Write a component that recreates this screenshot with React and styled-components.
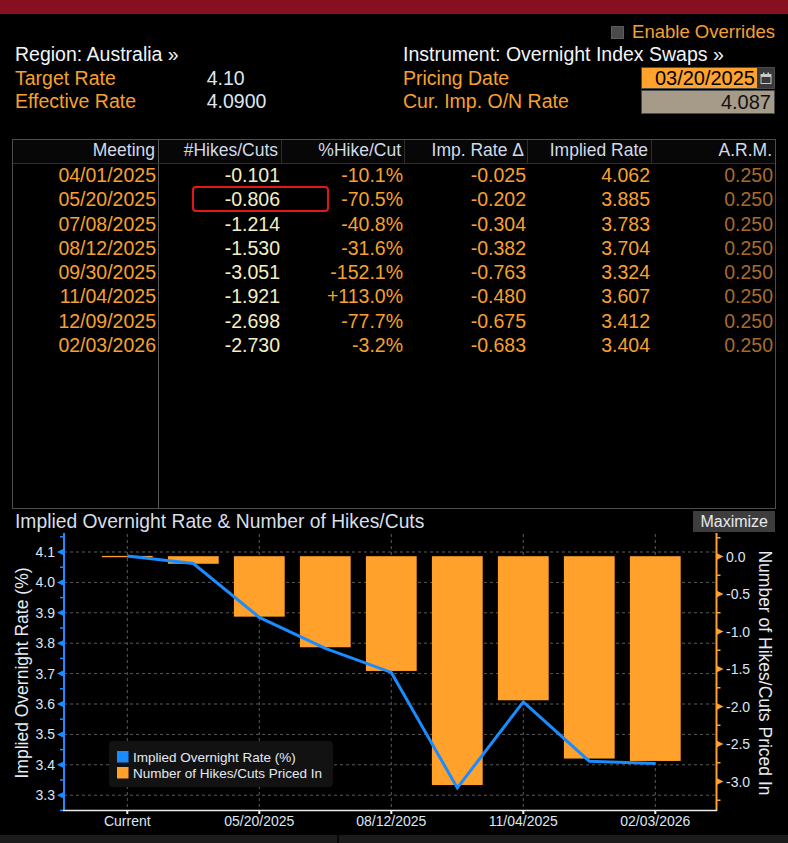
import React from 'react'
import styled, { createGlobalStyle } from 'styled-components'

const ORANGE = '#f7a02f'
const BAR = '#ffa12b'
const BLUE = '#1a8cff'
const PALE = '#dde6f3'

const GlobalStyle = createGlobalStyle`
html, body {
  margin: 0;
  padding: 0;
  background: #000;
}
body {
  font-family: "Liberation Sans", Arial, sans-serif;
  color: ${PALE};
}
`

const Page = styled.div`
width: 788px;
background: #000;
overflow: hidden;
`

const TitleBar = styled.div`
height: 14px;
background: #870f22;
`

const Header = styled.div`
display: grid;
grid-template-columns: 388px 1fr;
padding: 0 13px 0 15px;
`

const OverrideRow = styled.div`
grid-column: 1 / 3;
display: flex;
justify-content: flex-end;
align-items: center;
gap: 8px;
height: 23.4px;
margin-top: 6px;
font-size: 18.5px;
color: ${ORANGE};
`

const Checkbox = styled.span`
width: 11px;
height: 11px;
background: #4a4a4a;
border: 1px solid #5c5c5c;
margin-top: 1px;
`

const InfoColumn = styled.div`
display: flex;
flex-direction: column;
`

const InfoRow = styled.div`
display: flex;
align-items: center;
justify-content: space-between;
height: 23.4px;
font-size: 19.5px;
line-height: 23.4px;
white-space: nowrap;
`

const LeftRow = styled(InfoRow)`
justify-content: flex-start;
`

const Label = styled.span`
width: ${p => (p.$width ? p.$width : 'auto')};
color: ${p => (p.$tone === 'white' ? '#f2f4f7' : ORANGE)};
`

const Value = styled.span`
color: ${PALE};
`

const DateBox = styled.div`
display: flex;
width: 134px;
height: 22px;
box-sizing: border-box;
border: 1px solid #4a4a4a;
`

const DateField = styled.div`
flex: 1;
background: #ffa32d;
color: #000;
text-align: right;
padding-right: 2px;
font-size: 20px;
line-height: 20px;
`

const CalendarCell = styled.div`
width: 17px;
background: #3a3a3a;
display: flex;
align-items: center;
justify-content: center;
`

const RateBox = styled.div`
width: 134px;
height: 24px;
box-sizing: border-box;
border: 1px solid #4a4a4a;
background: #a69a89;
color: #111;
text-align: right;
padding-right: 3px;
font-size: 20px;
line-height: 22px;
`

const Table = styled.div`
margin: 25.4px 0 0 12px;
width: 764px;
height: 370px;
box-sizing: border-box;
border: 1px solid #4d4d4d;
display: flex;
flex-direction: column;
`

const COLUMNS = '146px 123px 123px 123px 124px 123px'

const HeaderRow = styled.div`
display: grid;
grid-template-columns: ${COLUMNS};
height: 23px;
border-bottom: 1px solid #2e2e2e;
background: #070707;
`

const HeadCell = styled.div`
text-align: right;
padding-right: 3px;
font-size: 17.5px;
line-height: 21px;
color: #d2dbe7;
border-right: 1px solid ${p => (p.$first ? '#5a5a5a' : '#2e2e2e')};
&:last-child {
  border-right: none;
}
`

const Body = styled.div`
flex: 1;
background: linear-gradient(to right, transparent 145px, #5a5a5a 145px, #5a5a5a 146px, transparent 146px);
`

const BodyRow = styled.div`
display: grid;
grid-template-columns: ${COLUMNS};
height: 24.3px;
`

const CELL_COLOURS = {
  date: ORANGE,
  count: '#f4f0c2',
  orange: ORANGE,
  dim: '#a86b2b',
}

const Cell = styled.div`
position: relative;
text-align: right;
padding-right: ${p => (p.$first ? '3px' : '2px')};
font-size: 19.5px;
line-height: 22px;
color: ${p => CELL_COLOURS[p.$tone]};
${p =>
  p.$marked &&
  `&::after {
    content: '';
    position: absolute;
    left: 33px;
    right: -47px;
    top: -2px;
    bottom: 1px;
    border: 2px solid #e3161b;
    border-radius: 4px;
  }`}
`

const ChartHeader = styled.div`
display: flex;
align-items: center;
justify-content: space-between;
height: 22px;
margin-top: 2px;
padding: 0 13px 0 15px;
`

const ChartTitle = styled.span`
font-size: 19.3px;
color: #d7dfea;
white-space: nowrap;
`

const MaximizeButton = styled.button`
height: 21px;
padding: 0 7px;
border: none;
background: #3d3d3d;
color: #e6eaf0;
font-family: "Liberation Sans", Arial, sans-serif;
font-size: 16px;
line-height: 21px;
`

const ChartSvg = styled.svg`
display: block;
`

const StatusStrip = styled.div`
height: 8px;
background: linear-gradient(to right, #1b1b1b 337px, #060606 337px, #060606 339px, #1b1b1b 339px);
`

const rows = [
  ['04/01/2025', '-0.101', '-10.1%', '-0.025', '4.062', '0.250'],
  ['05/20/2025', '-0.806', '-70.5%', '-0.202', '3.885', '0.250'],
  ['07/08/2025', '-1.214', '-40.8%', '-0.304', '3.783', '0.250'],
  ['08/12/2025', '-1.530', '-31.6%', '-0.382', '3.704', '0.250'],
  ['09/30/2025', '-3.051', '-152.1%', '-0.763', '3.324', '0.250'],
  ['11/04/2025', '-1.921', '+113.0%', '-0.480', '3.607', '0.250'],
  ['12/09/2025', '-2.698', '-77.7%', '-0.675', '3.412', '0.250'],
  ['02/03/2026', '-2.730', '-3.2%', '-0.683', '3.404', '0.250'],
]

const tones = ['date', 'count', 'orange', 'orange', 'orange', 'dim']
const heads = ['Meeting', '#Hikes/Cuts', '%Hike/Cut', 'Imp. Rate Δ', 'Implied Rate', 'A.R.M.']

const rates = [4.087, ...rows.map(r => parseFloat(r[4]))]
const hikes = [0, ...rows.map(r => parseFloat(r[1]))]

const xAt = i => 127.3 + 66 * i
const yLeft = v => 552 + (4.1 - v) * 304
const yRight = v => 556.5 - v * 75

const leftMajor = [4.1, 4.0, 3.9, 3.8, 3.7, 3.6, 3.5, 3.4, 3.3]
const rightMajor = [0, -0.5, -1, -1.5, -2, -2.5, -3]
const xLabels = [
  ['Current', 0],
  ['05/20/2025', 2],
  ['08/12/2025', 4],
  ['11/04/2025', 6],
  ['02/03/2026', 8],
]

const CalendarIcon = () => (
  <svg width="12" height="12" viewBox="0 0 12 12">
    <rect x="1" y="2.5" width="10" height="9" fill="none" stroke="#c8c8c8" strokeWidth="1" />
    <rect x="1" y="2.5" width="10" height="2.5" fill="#c8c8c8" />
    <rect x="3" y="0.5" width="1.5" height="3" fill="#c8c8c8" />
    <rect x="7.5" y="0.5" width="1.5" height="3" fill="#c8c8c8" />
  </svg>
)

const Chart = () => {
  const line = rates.map((r, i) => `${xAt(i)},${yLeft(r)}`).join(' ')
  return (
    <ChartSvg width="788" height="302" viewBox="0 533 788 302" fontFamily="Liberation Sans, Arial, sans-serif">
      {leftMajor.map(v => (
        <line key={'h' + v} x1="64" x2="716" y1={yLeft(v)} y2={yLeft(v)} stroke="#5a5a5a" strokeDasharray="3 3" />
      ))}
      {xLabels.map(([, i]) => (
        <line key={'v' + i} x1={xAt(i)} x2={xAt(i)} y1="534" y2="810" stroke="#5a5a5a" strokeDasharray="3 3" />
      ))}

      {hikes.map((h, i) =>
        i === 0 ? (
          <rect key={i} x={xAt(i) - 25.4} y="555.9" width="50.8" height="1.3" fill={BAR} />
        ) : (
          <rect key={i} x={xAt(i) - 25.4} y="556.2" width="50.8" height={-h * 75} fill={BAR} />
        )
      )}
      <polyline points={line} fill="none" stroke={BLUE} strokeWidth="3" />

      <line x1="64" x2="64" y1="533" y2="811" stroke={BLUE} strokeWidth="2" />
      {leftMajor.map(v => (
        <g key={'lt' + v}>
          <polygon points={`64,${yLeft(v) - 3.5} 64,${yLeft(v) + 3.5} 57,${yLeft(v)}`} fill={BLUE} />
          <text x="55" y={yLeft(v) + 5} textAnchor="end" fontSize="14" fill={PALE}>{v.toFixed(1)}</text>
        </g>
      ))}
      {[...leftMajor, 3.2].map(v => (
        <line key={'lm' + v} x1="60" x2="64" y1={yLeft(v + 0.05)} y2={yLeft(v + 0.05)} stroke={BLUE} strokeWidth="1.5" />
      ))}

      <line x1="716.5" x2="716.5" y1="533" y2="811" stroke={BAR} strokeWidth="2" />
      {rightMajor.map(v => (
        <g key={'rt' + v}>
          <polygon points={`716.5,${yRight(v) - 3.5} 716.5,${yRight(v) + 3.5} 723.5,${yRight(v)}`} fill={BAR} />
          <text x="726" y={yRight(v) + 5} fontSize="14" fill={PALE}>{v === 0 ? '0.0' : v.toFixed(1)}</text>
        </g>
      ))}
      {[0.25, -0.25, -0.75, -1.25, -1.75, -2.25, -2.75, -3.25].map(v => (
        <line key={'rm' + v} x1="716.5" x2="720.5" y1={yRight(v)} y2={yRight(v)} stroke={BAR} strokeWidth="1.5" />
      ))}

      <line x1="63" x2="717" y1="810.5" y2="810.5" stroke="#ececec" strokeWidth="1.5" />
      {xLabels.map(([label, i]) => (
        <g key={label}>
          <line x1={xAt(i)} x2={xAt(i)} y1="810" y2="814" stroke="#ececec" strokeWidth="2" />
          <text x={xAt(i)} y="826" textAnchor="middle" fontSize="14" fill={PALE}>{label}</text>
        </g>
      ))}

      <text x="27.5" y="673" transform="rotate(-90 27.5 673)" textAnchor="middle" fontSize="17.5" fill="#e6ecf5">
        Implied Overnight Rate (%)
      </text>
      <text x="759" y="673" transform="rotate(90 759 673)" textAnchor="middle" fontSize="17.5" fill="#e6ecf5">
        Number of Hikes/Cuts Priced In
      </text>

      <rect x="109" y="741" width="224" height="46" rx="4" fill="#121212" />
      <rect x="117" y="751" width="11.5" height="11.5" fill={BLUE} />
      <rect x="117" y="767" width="11.5" height="11.5" fill={BAR} />
      <text x="133" y="761.5" fontSize="13.5" fill="#e4eaf4">Implied Overnight Rate (%)</text>
      <text x="133" y="777.5" fontSize="13.5" fill="#e4eaf4">Number of Hikes/Cuts Priced In</text>
    </ChartSvg>
  )
}

const App = () => {
  return (
    <Page>
      <GlobalStyle />
      <TitleBar />
      <Header>
        <OverrideRow>
          <Checkbox />
          <span>Enable Overrides</span>
        </OverrideRow>
        <InfoColumn>
          <LeftRow><Label $tone="white">Region: Australia »</Label></LeftRow>
          <LeftRow><Label $width="191.7px">Target Rate</Label><Value>4.10</Value></LeftRow>
          <LeftRow><Label $width="191.7px">Effective Rate</Label><Value>4.0900</Value></LeftRow>
        </InfoColumn>
        <InfoColumn>
          <InfoRow><Label $tone="white">Instrument: Overnight Index Swaps »</Label></InfoRow>
          <InfoRow>
            <Label>Pricing Date</Label>
            <DateBox>
              <DateField>03/20/2025</DateField>
              <CalendarCell><CalendarIcon /></CalendarCell>
            </DateBox>
          </InfoRow>
          <InfoRow>
            <Label>Cur. Imp. O/N Rate</Label>
            <RateBox>4.087</RateBox>
          </InfoRow>
        </InfoColumn>
      </Header>

      <Table>
        <HeaderRow>
          {heads.map((h, i) => (
            <HeadCell key={h} $first={i === 0}>{h}</HeadCell>
          ))}
        </HeaderRow>
        <Body>
          {rows.map((r, ri) => (
            <BodyRow key={r[0]}>
              {r.map((v, ci) => (
                <Cell key={ci} $tone={tones[ci]} $first={ci === 0} $marked={ri === 1 && ci === 1}>{v}</Cell>
              ))}
            </BodyRow>
          ))}
        </Body>
      </Table>

      <ChartHeader>
        <ChartTitle>Implied Overnight Rate &amp; Number of Hikes/Cuts</ChartTitle>
        <MaximizeButton>Maximize</MaximizeButton>
      </ChartHeader>
      <Chart />
      <StatusStrip />
    </Page>
  )
}

export default App
